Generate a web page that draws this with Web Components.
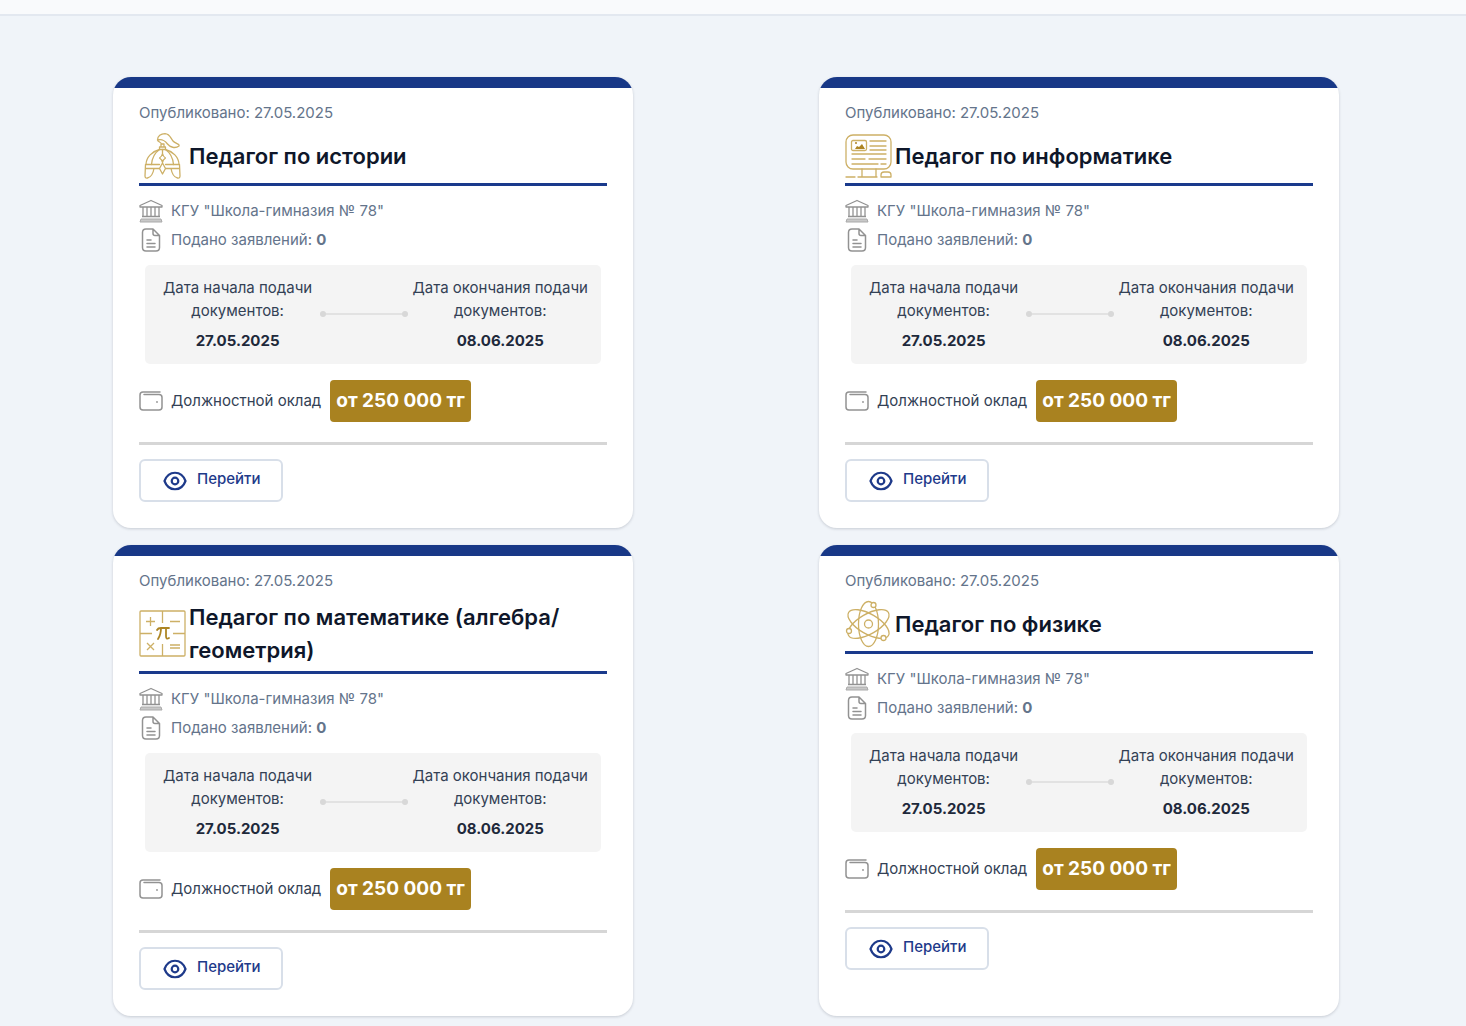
<!DOCTYPE html>
<html lang="ru">
<head>
<meta charset="utf-8">
<meta name="viewport" content="width=device-width, initial-scale=1">
<title>Вакансии</title>
<style>
body { margin: 0; min-height: 100vh; background: #f0f4f9; font-family: Inter, "Noto Sans", sans-serif; font-size: 15px; line-height: 24px; color: #334155; }
</style>
</head>
<body>
<site-header></site-header>
<vacancy-list>
  <vacancy-card subject="history" published="27.05.2025" school='КГУ "Школа-гимназия № 78"' count="0" start="27.05.2025" end="08.06.2025" salary="от 250 000 тг">Педагог по истории</vacancy-card>
  <vacancy-card subject="computer" published="27.05.2025" school='КГУ "Школа-гимназия № 78"' count="0" start="27.05.2025" end="08.06.2025" salary="от 250 000 тг">Педагог по информатике</vacancy-card>
  <vacancy-card subject="math" published="27.05.2025" school='КГУ "Школа-гимназия № 78"' count="0" start="27.05.2025" end="08.06.2025" salary="от 250 000 тг">Педагог по математике (алгебра/геометрия)</vacancy-card>
  <vacancy-card subject="physics" published="27.05.2025" school='КГУ "Школа-гимназия № 78"' count="0" start="27.05.2025" end="08.06.2025" salary="от 250 000 тг">Педагог по физике</vacancy-card>
</vacancy-list>
<script>
const ICONS = {
  history: [48, `<g fill="none" stroke="#cdb066" stroke-width="1.3" stroke-linejoin="round" stroke-linecap="round">
    <path d="M22.500 12C22 10 19 10 18.500 8C18.500 4 22 1.700 26 1.700C31 2 31.500 6 34 9C36 11.500 41 12 40 14C36 17 31 15 28.500 12C26.500 9.500 24 6.500 18.500 8M22 12h3v3h-3zM20.500 15h6v2.500h-6z"/>
    <path d="M7 32C7.500 25 13 19.500 20.500 17.500M26.500 17.500C34 19.500 39.500 25 40 32M6.500 32.500h14M26.500 32.500h14M6.500 36.500h14M26.500 36.500h14M6.500 32.500L6 44q0 2.500 2.500 2 5-1 6.500-9.500M40.500 32.500L41 44q0 2.500-2.500 2-5-1-6.500-9.500"/>
    <path d="M20.500 17.500c-5 3.500-7.500 9-8 15M26.500 17.500c5 3.500 7.500 9 8 15M23.500 17.500v4M23.500 21.500q.5 3 3 4.500-2.500 1.500-3 4.500-.5-3-3-4.500 2.500-1.500 3-4.500zM23.500 31l3 5.500-3 5.500-3-5.500z"/></g>`],
  computer: [48, `<g fill="none" stroke="#cdb066" stroke-width="1.300" stroke-linejoin="round" stroke-linecap="round">
    <rect x="1" y="3" width="45" height="34" rx="7"/><rect x="6.500" y="8.500" width="15" height="10" rx="1.500"/>
    <path d="M25 9h16M25 14h16M25 18h16M7 22h34M7 27h13M24 27h17M7 32h26M36 32h5M17 37v8M31 37v8M1 45h9M13 45h19"/><path d="M36 45v-2q0-3 3-3h4q3 0 3 3v2z"/></g><path d="M10 17l2-3 2 1 3-3 3 5z" fill="#ad8524"/><circle cx="11" cy="11" r="1" fill="#ad8524"/>`],
  math: [48, `<g fill="none" stroke="#cdb066" stroke-width="1.300"><rect x="1" y="1" width="45" height="45" rx="1"/>
    <path d="M23.500 1v12M23.500 34v12M1 23.500h12M34 23.500h12M7 11.500h9M11.500 7v9M31 11.500h10M8 33l7 7M15 33l-7 7M31 35h10M31 38h10"/></g>
    <path d="M18 20q1-2 4-2h8M22 18c0 5-1 8-3 11M27 18v8q0 4 3 2" fill="none" stroke="#ad8524" stroke-width="1.800" stroke-linecap="round"/>`],
  physics: [48, `<g fill="none" stroke="#cdb066" stroke-width="1.300"><ellipse cx="23.500" cy="24" rx="10" ry="22.500"/>
    <ellipse cx="23.500" cy="24" rx="10" ry="23" transform="rotate(60 23.500 24)"/><ellipse cx="23.500" cy="24" rx="10" ry="23" transform="rotate(-60 23.500 24)"/>
    <circle cx="23.500" cy="24" r="4"/><g fill="#fff"><circle cx="28.500" cy="5" r="2.500"/><circle cx="4" cy="31" r="2.500"/><circle cx="38.500" cy="38" r="2.500"/></g></g>`],
  school: [24, `<g fill="none" stroke="#929292" stroke-width="1.300" stroke-linejoin="round"><path d="M1 8V6.500l11-5 11 5V8zM4 8v9.500M8 8v9.500M12 8v9.500M16 8v9.500M20 8v9.500M3 17.500h18"/><path d="M2 20h20l1 3H1z" fill="#c8c8c8" stroke="#aaa" stroke-width="1"/></g>`],
  file: [24, `<g fill="none" stroke="#929292" stroke-width="1.500" stroke-linejoin="round" stroke-linecap="round"><path d="M14 1H7Q3.500 1 3.500 4.500v15q0 3.500 3.500 3.500h10q3.500 0 3.500-3.500V7.500zM14 1v4.500q0 2 2 2h4.500M8 12h4M8 15.500h8M8 19h8"/></g>`],
  wallet: [24, `<g fill="none" stroke="#929292" stroke-width="1.500" stroke-linecap="round"><path d="M21 3H4Q1 3 1 6v12q0 3 3 3h16q3 0 3-3V8.500q0-3-3-3H5"/></g><circle cx="18" cy="13" r=".9" fill="#929292"/>`],
  eye: [24, `<g fill="none" stroke="#1e3a8a" stroke-width="2.200"><path d="M1.500 12C5.500 1 18.500 1 22.500 12C18.500 23 5.500 23 1.500 12z" stroke-linejoin="round"/><circle cx="12" cy="12" r="3.300"/></g>`]
};

customElements.define('site-header', class extends HTMLElement {
  constructor() {
    super();
    this.attachShadow({ mode: 'open' }).innerHTML = `<style>
      :host { display: block; }
      header { height: 14px; background: #f9fafc; border-bottom: 2px solid #e3e8f0; }
    </style><header></header>`;
  }
});

customElements.define('vacancy-icon', class extends HTMLElement {
  connectedCallback() {
    if (this.shadowRoot) return;
    const [size, art] = ICONS[this.getAttribute('name')];
    this.attachShadow({ mode: 'open' }).innerHTML = `<style>
      :host { display: block; flex: none; } svg { display: block; }
    </style><svg width="${size}" height="${size}" viewBox="0 0 ${size} ${size}" aria-hidden="true">${art}</svg>`;
  }
});

customElements.define('vacancy-list', class extends HTMLElement {
  constructor() {
    super();
    this.attachShadow({ mode: 'open' }).innerHTML = `<style>
      :host { display: block; }
      main { display: grid; grid-template-columns: repeat(auto-fit, minmax(min(100%, 520px), 1fr)); gap: 17px 0; padding: 61px 34px 10px 20px; }
      ::slotted(*) { width: 100%; max-width: 520px; justify-self: center; }
    </style><main><slot></slot></main>`;
  }
});

customElements.define('date-range', class extends HTMLElement {
  connectedCallback() {
    if (this.shadowRoot) return;
    this.attachShadow({ mode: 'open' }).innerHTML = `<style>
      :host { display: block; }
      .panel { display: flex; align-items: center; padding: 11px 13px 12px 18px; border-radius: 5px; background: #f4f4f4; line-height: 23px; text-align: center; }
      p { margin: 0; white-space: nowrap; }
      strong { display: block; margin-top: 7px; font-weight: 700; color: #1e293b; }
      .rail { flex: 1; display: flex; align-items: center; justify-content: space-between; height: 2px; margin: 0 4px 0 8px; background: #e2e2e2; }
      .rail::before, .rail::after { content: ""; width: 6px; height: 6px; border-radius: 50%; background: #d8d8d8; }
    </style><div class="panel">
      <p>Дата начала подачи<br>документов:<strong>${this.getAttribute('start')}</strong></p>
      <div class="rail"></div>
      <p>Дата окончания подачи<br>документов:<strong>${this.getAttribute('end')}</strong></p>
    </div>`;
  }
});

customElements.define('vacancy-card', class extends HTMLElement {
  connectedCallback() {
    if (this.shadowRoot) return;
    const a = name => this.getAttribute(name);
    this.attachShadow({ mode: 'open' }).innerHTML = `<style>
      :host { display: block; }
      article { box-sizing: border-box; height: 100%; overflow: hidden; border-radius: 18px; background: #fff; box-shadow: 0 1px 3px #0f172a2e; }
      .bar { height: 11px; background: #183887; }
      .body { padding: 13px 26px 26px; }
      .published, .meta { color: #64748b; }
      .title { display: flex; align-items: center; gap: 2px; margin-top: 7px; padding-bottom: 3px; border-bottom: 3px solid #1a3a8c; }
      h2 { margin: 0; padding: 1px 0; font-size: 22px; line-height: 33px; font-weight: 600; color: #0f172a; }
      .info { padding: 10px 0 11px; }
      .meta { display: flex; align-items: center; gap: 8px; height: 29px; }
      b { font-weight: 700; }
      date-range { margin: 0 6px; }
      .salary { display: flex; align-items: center; gap: 8px; padding: 16px 0 20px; border-bottom: 3px solid #d6d6d6; }
      .badge { margin-left: 1px; padding: 9px 6px; border-radius: 4px; background: #a98220; color: #fff; font-size: 19px; font-weight: 700; white-space: nowrap; }
      button { display: flex; align-items: center; gap: 10px; margin-top: 14px; padding: 0 20px 0 22px; height: 43px; border: 2px solid #d8dfe9; border-radius: 6px; background: #fff; color: #1e3a8a; font: 500 15px/24px Inter, "Noto Sans", sans-serif; cursor: pointer; }
      button span { padding-bottom: 4px; }
    </style><article>
      <div class="bar"></div>
      <div class="body">
        <div class="published">Опубликовано: ${a('published')}</div>
        <div class="title"><vacancy-icon name="${a('subject')}"></vacancy-icon><h2><slot></slot></h2></div>
        <div class="info">
          <div class="meta"><vacancy-icon name="school"></vacancy-icon><span>${a('school')}</span></div>
          <div class="meta"><vacancy-icon name="file"></vacancy-icon><span>Подано заявлений: <b>${a('count')}</b></span></div>
        </div>
        <date-range start="${a('start')}" end="${a('end')}"></date-range>
        <div class="salary"><vacancy-icon name="wallet"></vacancy-icon><span>Должностной оклад</span><span class="badge">${a('salary')}</span></div>
        <button type="button"><vacancy-icon name="eye"></vacancy-icon><span>Перейти</span></button>
      </div>
    </article>`;
  }
});
</script>
</body>
</html>
